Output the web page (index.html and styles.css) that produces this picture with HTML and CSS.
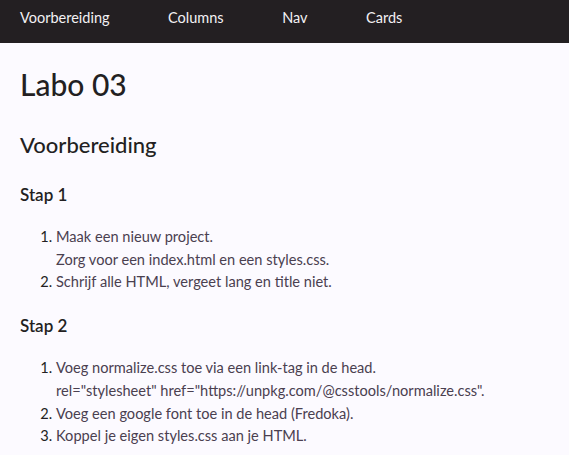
FILE: index.html
```html
<!DOCTYPE html>
<html lang="nl">
<head>
    <meta charset="UTF-8">
    <meta name="viewport" content="width=device-width, initial-scale=1.0">
    <title>Labo 03</title>
    <link rel="stylesheet" href="styles.css">
</head>
<body>
    <nav class="topnav">
        <ul>
            <li><a href="#voorbereiding">Voorbereiding</a></li>
            <li><a href="columns.html">Columns</a></li>
            <li><a href="nav.html">Nav</a></li>
            <li><a href="cards.html">Cards</a></li>
        </ul>
    </nav>

    <main class="content">
        <h1>Labo 03</h1>

        <section id="voorbereiding">
            <h2>Voorbereiding</h2>

            <h3>Stap 1</h3>
            <ol class="steps">
                <li>
                    Maak een nieuw project.<br>
                    Zorg voor een index.html en een styles.css.
                </li>
                <li>Schrijf alle HTML, vergeet lang en title niet.</li>
            </ol>

            <h3>Stap 2</h3>
            <ol class="steps">
                <li>
                    Voeg normalize.css toe via een link-tag in de head.<br>
                    rel="stylesheet" href="https://unpkg.com/@csstools/normalize.css".
                </li>
                <li>Voeg een google font toe in de head (Fredoka).</li>
                <li>Koppel je eigen styles.css aan je HTML.</li>
            </ol>
        </section>
    </main>
</body>
</html>
```

FILE: styles.css
```css
body {
    margin: 0;
    font-family: Lato, "Open Sans", sans-serif;
    background-color: #fcfaff;
    color: #231f22;
}

.topnav {
    background-color: #231f22;
    box-sizing: border-box;
    height: 43px;
    padding: 7px 20px 0;
}

.topnav ul {
    list-style: none;
    margin: 0;
    padding: 0;
    display: flex;
    gap: 58.5px;
}

.topnav a {
    color: #f3f1f4;
    text-decoration: none;
    font-size: 14.5px;
}

.content {
    padding: 0 20px;
}

h1 {
    font-size: 30px;
    font-weight: 500;
    margin: 23px 0 0;
}

h2 {
    font-size: 22px;
    font-weight: 500;
    margin: 29px 0 26px;
}

h3 {
    font-size: 17px;
    font-weight: 600;
    margin: 21px 0;
}

.steps {
    margin: 20px 0;
    padding-left: 36px;
    color: #4a4050;
    font-size: 14.6px;
    line-height: 22.7px;
}

.steps li::marker {
    color: #231f22;
}
```
